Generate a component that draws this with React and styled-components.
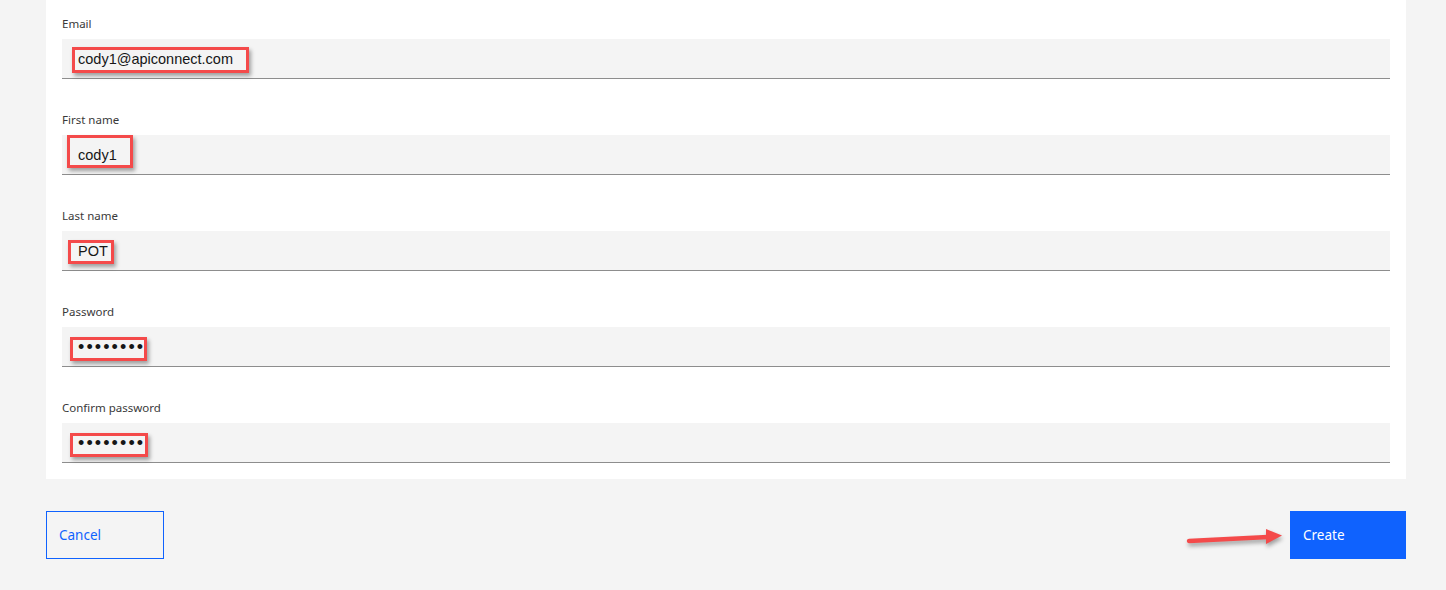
import React from "react";
import styled, { createGlobalStyle } from "styled-components";

const Global = createGlobalStyle`
  html, body { margin: 0; padding: 0; background: #f4f4f4; }
  body { font-family: "Noto Sans", Inter, sans-serif; }
`;

const Page = styled.div`
  padding: 0 40px 31px 46px;
  background: #f4f4f4;
  min-height: 590px;
  box-sizing: border-box;
`;

const Card = styled.div`
  background: #ffffff;
  padding: 15px 16px 16px;
  display: flex;
  flex-direction: column;
  gap: 32px;
`;

const Field = styled.div`
  display: flex;
  flex-direction: column;
  gap: 7px;
`;

const Label = styled.label`
  font-family: "Noto Sans", Inter, sans-serif;
  font-size: 11.5px;
  line-height: 16px;
  padding-top: 1px;
  color: #393939;
`;

const InputBox = styled.div`
  position: relative;
  height: 39px;
  background: #f4f4f4;
  border-bottom: 1px solid #8d8d8d;
  display: flex;
  align-items: center;
  padding-left: 16px;
  font-family: "Liberation Sans", Arial, sans-serif;
  font-size: 14.5px;
  color: #161616;
`;

const Value = styled.span`
  position: relative;
  z-index: 1;
  letter-spacing: ${(p) => (p.$secret ? "2.1px" : "0")};
  font-size: ${(p) => (p.$secret ? "18px" : "14.5px")};
  padding-top: ${(p) => (p.$secret ? "2px" : "0")};
`;

const Highlight = styled.div`
  position: absolute;
  left: ${(p) => p.$left}px;
  top: ${(p) => p.$top}px;
  width: ${(p) => p.$w}px;
  height: ${(p) => p.$h}px;
  border: 3px solid #f44a4a;
  box-sizing: border-box;
  box-shadow: 2px 3px 4px rgba(0, 0, 0, 0.35);
  pointer-events: none;
`;

const Actions = styled.div`
  position: relative;
  margin-top: 32px;
  display: flex;
  justify-content: space-between;
  align-items: center;
`;

const Button = styled.button`
  height: 48px;
  width: ${(p) => p.$w}px;
  box-sizing: border-box;
  text-align: left;
  padding: 0 12px;
  font-family: "Noto Sans", Inter, sans-serif;
  font-size: 13.5px;
  cursor: pointer;
  border: 1px solid #0f62fe;
  background: ${(p) => (p.$primary ? "#0f62fe" : "transparent")};
  color: ${(p) => (p.$primary ? "#ffffff" : "#0f62fe")};
  border-radius: 0;
`;

const Arrow = styled.svg`
  position: absolute;
  right: 120px;
  top: 14px;
  overflow: visible;
  filter: drop-shadow(1px 3px 2px rgba(0, 0, 0, 0.35));
`;

const fields = [
  { label: "Email", value: "cody1@apiconnect.com", hl: { left: 10, top: 8, w: 177, h: 26 } },
  { label: "First name", value: "cody1", hl: { left: 5, top: 0, w: 66, h: 33 } },
  { label: "Last name", value: "POT", hl: { left: 6, top: 9, w: 46, h: 24 } },
  { label: "Password", value: "••••••••", secret: true, hl: { left: 8, top: 10, w: 77, h: 24 } },
  { label: "Confirm password", value: "••••••••", secret: true, hl: { left: 8, top: 10, w: 78, h: 24 } },
];

export default function App() {
  return (
    <>
      <Global />
      <Page>
        <Card>
          {fields.map((f) => (
            <Field key={f.label}>
              <Label>{f.label}</Label>
              <InputBox>
                <Highlight $left={f.hl.left} $top={f.hl.top} $w={f.hl.w} $h={f.hl.h} />
                <Value $secret={f.secret}>{f.value}</Value>
              </InputBox>
            </Field>
          ))}
        </Card>
        <Actions>
          <Button $w={118}>Cancel</Button>
          <Arrow width="100" height="24" viewBox="0 0 100 24">
            <line x1="3" y1="16" x2="82" y2="12" stroke="#f44a4a" strokeWidth="4.5" strokeLinecap="round" />
            <polygon points="80,4 96,10.5 80,19" fill="#f44a4a" />
          </Arrow>
          <Button $w={116} $primary>Create</Button>
        </Actions>
      </Page>
    </>
  );
}
